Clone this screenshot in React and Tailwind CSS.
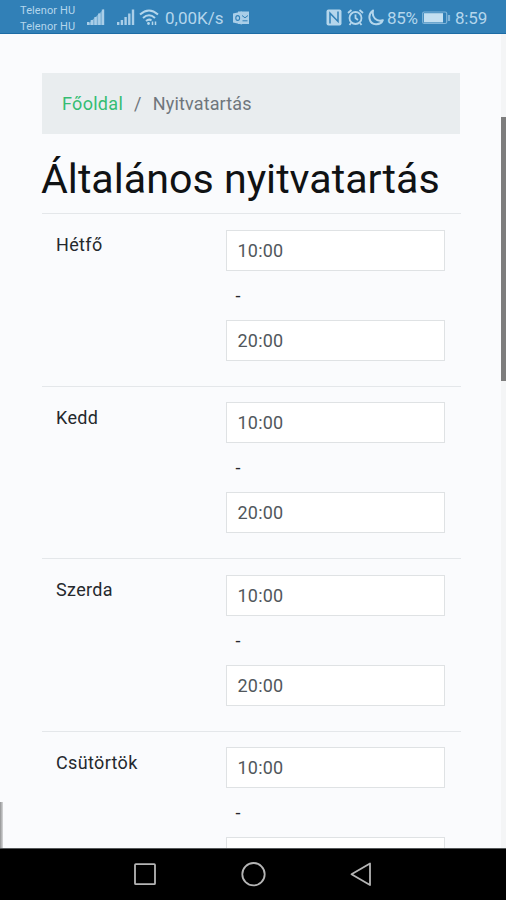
const days = [
  { name: 'Hétfő', open: '10:00', close: '20:00' },
  { name: 'Kedd', open: '10:00', close: '20:00' },
  { name: 'Szerda', open: '10:00', close: '20:00' },
  { name: 'Csütörtök', open: '10:00', close: '' },
];

function SignalIcon({ solid = false }) {
  return (
    <svg width="18" height="17" viewBox="0 0 18 17" fill="#a9cee8">
      {solid && <path d="M0 16 L17 0 V16 Z" opacity="0.6" />}
      <path d="M0 13h2.4v3H0zM3.7 11h2.4v5H3.7zM7.4 8h2.4v8H7.4zM11.1 4.5h2.4V16h-2.4zM14.8 0.5h2.4V16h-2.4z" />
    </svg>
  );
}

function WifiIcon() {
  return (
    <svg width="20" height="17" viewBox="0 0 20 17" fill="none" stroke="#b4d6ec" strokeWidth="2">
      <path d="M1 5.5 Q10 -2.5 19 5.5" />
      <path d="M4 9 Q10 3.5 16 9" />
      <path d="M7 12 Q10 9.5 12.5 11.5" />
      <circle cx="9.5" cy="14.5" r="1.4" fill="#b4d6ec" stroke="none" />
      <path d="M13.5 12.5v3.5M16.5 12.5v3.5" strokeWidth="1.5" />
    </svg>
  );
}

function OutlookIcon() {
  return (
    <svg width="17" height="14" viewBox="0 0 17 14">
      <path d="M0 2.5 L9 0.5 V13.5 L0 11.5 Z" fill="#a9cee8" />
      <path d="M5 0.5h11v12.5H5z" fill="#a9cee8" />
      <ellipse cx="4.7" cy="7" rx="1.9" ry="2.4" fill="none" stroke="#3180b7" strokeWidth="1.1" />
      <path d="M9 4.5l3 2.3 3-2.3M9.5 9.8h5" fill="none" stroke="#3180b7" strokeWidth="1" />
    </svg>
  );
}

function NfcIcon() {
  return (
    <svg width="16" height="17" viewBox="0 0 16 17" fill="none">
      <rect x="0.5" y="0.5" width="15" height="16" rx="2" fill="#b4d6ec" />
      <path d="M4 14.5V4.2l8 8.3V2.5" stroke="#3180b7" strokeWidth="1.5" />
    </svg>
  );
}

function AlarmIcon() {
  return (
    <svg width="17" height="17" viewBox="0 0 17 17" fill="none" stroke="#b4d6ec" strokeWidth="1.8">
      <circle cx="8.5" cy="9" r="6" />
      <path d="M1 4l3.5-3M16 4l-3.5-3M8.5 5.5V9l2.5 2M4 14l-1.5 2M13 14l1.5 2" />
    </svg>
  );
}

function MoonIcon() {
  return (
    <svg width="16" height="17" viewBox="0 0 16 17" fill="none" stroke="#b4d6ec" strokeWidth="2" strokeLinejoin="round">
      <path d="M5 1.5 C-1 6 1 15 8 15.2 C11.5 15.3 14 13.5 14.8 11.2 C8.5 13 3.5 8.5 5 1.5Z" />
    </svg>
  );
}

function BatteryIcon() {
  return (
    <svg width="29" height="14" viewBox="0 0 29 14" fill="none" stroke="#80b4d9">
      <rect x="0.7" y="1" width="24" height="11.5" rx="1.5" strokeWidth="1.2" />
      <rect x="2" y="2.2" width="19" height="9.2" fill="#c3dff1" stroke="none" />
      <path d="M27 4v6" strokeWidth="2.2" />
    </svg>
  );
}

function StatusBar() {
  return (
    <header className="flex h-[34px] shrink-0 items-center border-b border-[#1c6ca5] bg-[#3180b7] pt-[2px] pr-[19px] pl-5 text-[#b4d6ec]">
      <div className="w-[67px] pt-[2px] text-[11px] leading-[15.5px] tracking-[0.1px] whitespace-nowrap">
        <div>Telenor HU</div>
        <div>Telenor HU</div>
      </div>
      <SignalIcon solid />
      <div className="ml-3 flex items-center">
        <SignalIcon />
        <div className="ml-1">
          <WifiIcon />
        </div>
      </div>
      <span className="ml-[6px] w-[60px] pt-[2px] text-[17px] whitespace-nowrap">0,00K/s</span>
      <div className="ml-2">
        <OutlookIcon />
      </div>
      <div className="ml-auto flex items-center">
        <NfcIcon />
        <div className="ml-[5px]">
          <AlarmIcon />
        </div>
        <div className="ml-[4px]">
          <MoonIcon />
        </div>
        <span className="ml-[3px] w-[32px] pt-[2px] text-[17px] tracking-[-0.3px] whitespace-nowrap">85%</span>
        <div className="ml-[3px]">
          <BatteryIcon />
        </div>
        <span className="ml-[4px] w-8 pt-[2px] text-[17px] tracking-[-0.2px] whitespace-nowrap">8:59</span>
      </div>
    </header>
  );
}

function TimeInput({ value }) {
  return (
    <div className="flex h-[41px] items-center border border-[#dfe2e4] bg-white pl-[11px] text-[#51575c]">
      {value}
    </div>
  );
}

function DayRow({ name, open, close }) {
  return (
    <div className="flex h-[172.5px] border-t border-[#e4e7ea] pt-[15.5px] pr-4 pl-[14px]">
      <div className="w-[169.5px] pt-[1.5px] leading-[27px] tracking-[0.35px] text-[#25292d]">{name}</div>
      <div className="flex-1">
        <TimeInput value={open} />
        <div className="flex h-[49px] items-center pl-[10px] text-[#25292d]">-</div>
        <TimeInput value={close} />
      </div>
    </div>
  );
}

function NavBar() {
  return (
    <nav className="flex h-[52px] shrink-0 items-center border-t border-[#55585a] bg-black pl-[133px]">
      <svg width="240" height="26" viewBox="0 0 240 26" fill="none" stroke="#b5b5b5" strokeWidth="1.8" strokeLinejoin="round">
        <rect x="2" y="2.2" width="20" height="20" rx="0.8" />
        <circle cx="120.5" cy="12.2" r="11.2" />
        <path d="M237 1.5v21.5l-18.5-10.8z" />
      </svg>
    </nav>
  );
}

export default function App() {
  return (
    <div className="flex h-[900px] w-[506px] flex-col overflow-hidden bg-[#fafbfd] font-['Roboto','Liberation_Sans',sans-serif]">
      <StatusBar />
      <div className="flex min-h-0 flex-1">
        <div className="flex w-1 shrink-0 flex-col justify-end overflow-hidden">
          <div className="h-[46px] w-[3px] bg-linear-to-r from-[#929394] to-[#d8d9db]" />
        </div>
        <main className="min-w-0 flex-1 overflow-hidden pt-[39px] pr-[40px] pl-[38px] text-[18px] tracking-[0.2px]">
          <div className="mr-[1px] flex h-[61px] items-center bg-[#e9edef] pl-[20px] text-[#6f767c]">
            <a className="tracking-[0.3px] text-[#35bd73]">Főoldal</a>
            <span className="px-[11px]">/</span>
            <span className="tracking-[0.15px]">Nyitvatartás</span>
          </div>
          <h1 className="-ml-px flex h-[79px] items-center pt-[11px] text-[41.2px] leading-[50px] tracking-normal whitespace-nowrap text-[#101214]">
            Általános nyitvatartás
          </h1>
          {days.map((day) => (
            <DayRow key={day.name} {...day} />
          ))}
        </main>
        <div className="w-[5px] shrink-0 bg-[#f4f5f6] pt-[83px]">
          <div className="h-[264px] bg-[#7d7d7d]" />
        </div>
      </div>
      <NavBar />
    </div>
  );
}
